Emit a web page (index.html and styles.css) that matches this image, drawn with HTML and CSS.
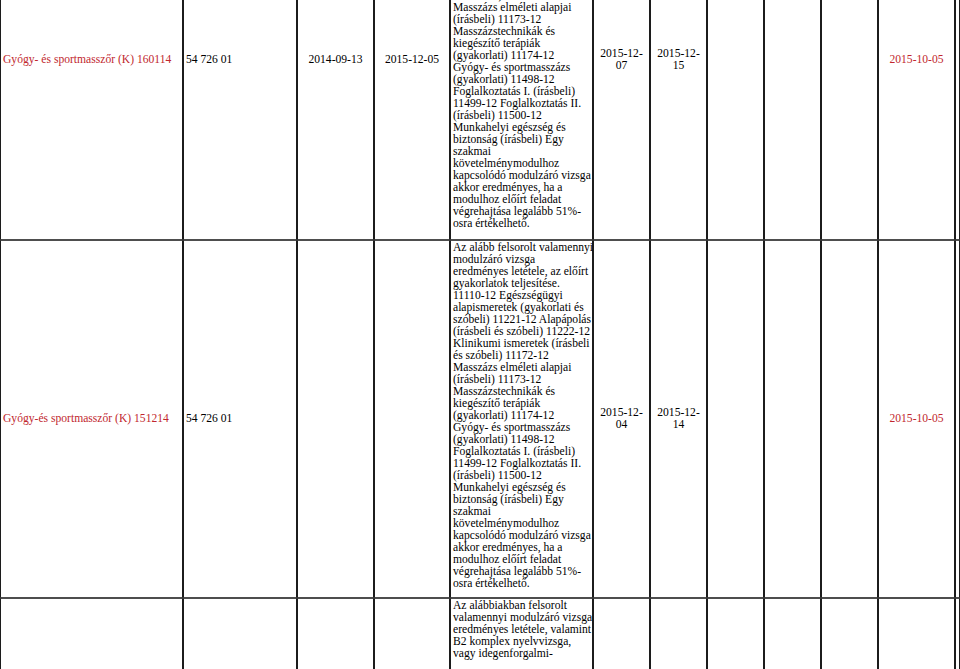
FILE: index.html
```html
<!DOCTYPE html>
<html lang="hu">
<head>
<meta charset="utf-8">
<title>Vizsgaidőpontok</title>
<link rel="stylesheet" href="styles.css">
</head>
<body>
<table class="exams">
  <colgroup>
    <col class="w-name"><col class="w-code"><col class="w-d1"><col class="w-d2"><col class="w-desc">
    <col class="w-s"><col class="w-s"><col class="w-s"><col class="w-s"><col class="w-s">
    <col class="w-d3"><col class="w-end">
  </colgroup>
  <tbody>
    <tr class="row-a">
      <td class="name">Gyógy- és sportmasszőr (K) 160114</td>
      <td class="code">54 726 01</td>
      <td class="mid">2014-09-13</td>
      <td class="mid">2015-12-05</td>
      <td class="desc">Az alább felsorolt valamennyi<br>modulzáró vizsga<br>eredményes letétele, az előírt<br>gyakorlatok teljesítése.<br>11110-12 Egészségügyi<br>alapismeretek (gyakorlati és<br>szóbeli) 11221-12 Alapápolás<br>(írásbeli és szóbeli) 11222-12<br>Klinikumi ismeretek (írásbeli<br>és szóbeli) 11172-12<br>Masszázs elméleti alapjai<br>(írásbeli) 11173-12<br>Masszázstechnikák és<br>kiegészítő terápiák<br>(gyakorlati) 11174-12<br>Gyógy- és sportmasszázs<br>(gyakorlati) 11498-12<br>Foglalkoztatás I. (írásbeli)<br>11499-12 Foglalkoztatás II.<br>(írásbeli) 11500-12<br>Munkahelyi egészség és<br>biztonság (írásbeli) Egy<br>szakmai<br>követelménymodulhoz<br>kapcsolódó modulzáró vizsga<br>akkor eredményes, ha a<br>modulhoz előírt feladat<br>végrehajtása legalább 51%-<br>osra értékelhető.</td>
      <td class="mid">2015-12-<wbr>07</td>
      <td class="mid">2015-12-<wbr>15</td>
      <td></td>
      <td></td>
      <td></td>
      <td class="mid red">2015-10-05</td>
      <td class="end"></td>
    </tr>
    <tr class="row-b">
      <td class="name">Gyógy-és sportmasszőr (K) 151214</td>
      <td class="code">54 726 01</td>
      <td class="mid"></td>
      <td class="mid"></td>
      <td class="desc">Az alább felsorolt valamennyi<br>modulzáró vizsga<br>eredményes letétele, az előírt<br>gyakorlatok teljesítése.<br>11110-12 Egészségügyi<br>alapismeretek (gyakorlati és<br>szóbeli) 11221-12 Alapápolás<br>(írásbeli és szóbeli) 11222-12<br>Klinikumi ismeretek (írásbeli<br>és szóbeli) 11172-12<br>Masszázs elméleti alapjai<br>(írásbeli) 11173-12<br>Masszázstechnikák és<br>kiegészítő terápiák<br>(gyakorlati) 11174-12<br>Gyógy- és sportmasszázs<br>(gyakorlati) 11498-12<br>Foglalkoztatás I. (írásbeli)<br>11499-12 Foglalkoztatás II.<br>(írásbeli) 11500-12<br>Munkahelyi egészség és<br>biztonság (írásbeli) Egy<br>szakmai<br>követelménymodulhoz<br>kapcsolódó modulzáró vizsga<br>akkor eredményes, ha a<br>modulhoz előírt feladat<br>végrehajtása legalább 51%-<br>osra értékelhető.</td>
      <td class="mid">2015-12-<wbr>04</td>
      <td class="mid">2015-12-<wbr>14</td>
      <td></td>
      <td></td>
      <td></td>
      <td class="mid red">2015-10-05</td>
      <td class="end"></td>
    </tr>
    <tr class="row-c">
      <td class="name"></td>
      <td class="code"></td>
      <td class="mid"></td>
      <td class="mid"></td>
      <td class="desc">Az alábbiakban felsorolt<br>valamennyi modulzáró vizsga<br>eredményes letétele, valamint<br>B2 komplex nyelvvizsga,<br>vagy idegenforgalmi-</td>
      <td class="mid"></td>
      <td class="mid"></td>
      <td></td>
      <td></td>
      <td></td>
      <td class="mid red"></td>
      <td class="end"></td>
    </tr>
  </tbody>
</table>
</body>
</html>
```

FILE: styles.css
```css
html, body {
  margin: 0;
  padding: 0;
  background: #ffffff;
}

body {
  font-family: "Liberation Serif", "Times New Roman", serif;
  font-size: 11.6px;
  line-height: 12px;
  color: #000000;
  overflow: hidden;
}

.exams {
  table-layout: fixed;
  width: 958px;
  border-collapse: separate;
  border-spacing: 0;
  margin-top: -120px;
}

.w-name { width: 183px; }
.w-code { width: 114px; }
.w-d1 { width: 77px; }
.w-d2 { width: 76px; }
.w-desc { width: 143px; }
.w-s { width: 57px; }
.w-d3 { width: 77px; }
.w-end { width: 5px; }

.exams td {
  box-sizing: border-box;
  border-left: 1px solid #1c1c1c;
  border-right: 1px solid #1c1c1c;
  border-top: 1px solid #4e4e4e;
  border-bottom: 1px solid #4e4e4e;
  padding: 0 2px;
  vertical-align: middle;
  overflow: visible;
}

.row-a { height: 360px; }
.row-b { height: 358px; }
.row-c { height: 140px; }

.name {
  color: #c1272e;
  text-align: left;
  padding-left: 3px;
  white-space: nowrap;
}

.code {
  text-align: left;
}

.mid {
  text-align: center;
}

.red {
  color: #c1272e;
}

.exams td.desc {
  vertical-align: top;
  padding-top: 1px;
  white-space: nowrap;
}

.exams td.end {
  padding: 0;
}
```
